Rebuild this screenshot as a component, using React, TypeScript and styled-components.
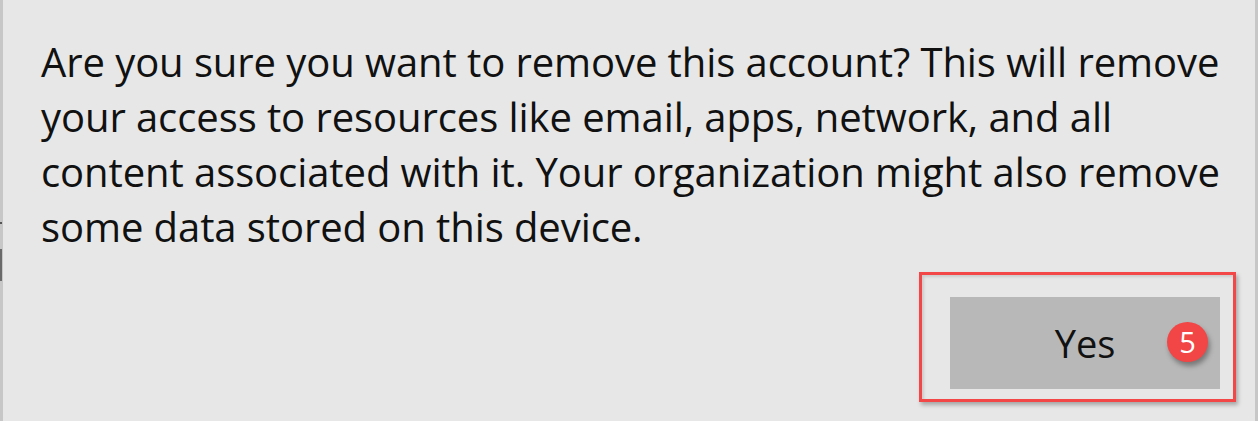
import React from "react";
import styled, { createGlobalStyle } from "styled-components";

const GlobalStyle = createGlobalStyle`
  html, body { margin: 0; padding: 0; background: #e7e7e7; }
  body { font-family: "Open Sans", "Noto Sans", sans-serif; }
`;

const Frame = styled.div`
  display: flex;
  width: 1258px;
  height: 421px;
  background: #e7e7e7;
  overflow: hidden;
`;

const EdgeStrip = styled.div`
  width: 3px;
  flex: none;
  background: #c7c7c7;
  display: flex;
  flex-direction: column;
`;

const EdgeMark = styled.div<{ $top: number; $h: number; $c: string }>`
  width: 2px;
  height: ${(p) => p.$h}px;
  margin-top: ${(p) => p.$top}px;
  background: ${(p) => p.$c};
`;

const Panel = styled.div`
  flex: 1;
  display: flex;
  flex-direction: column;
  padding: 34px 0 0 38px;
`;

const Message = styled.p`
  margin: 0;
  font-size: 40px;
  letter-spacing: -0.08px;
  line-height: 55px;
  color: #111;
  white-space: nowrap;
`;

const ButtonRow = styled.div`
  display: flex;
  justify-content: flex-end;
  margin-top: 43px;
  padding-right: 35px;
`;

const ButtonWrap = styled.div`
  position: relative;
`;

const YesButton = styled.button`
  width: 270px;
  height: 92px;
  border: none;
  background: #b8b8b8;
  font-family: "Open Sans", "Noto Sans", sans-serif;
  font-size: 38px;
  color: #111;
  padding: 0;
`;

const Annotation = styled.div`
  position: absolute;
  left: -31px;
  top: -25px;
  right: -16px;
  bottom: -13px;
  border: 3px solid #f34646;
  box-shadow: 2px 3px 4px rgba(0, 0, 0, 0.28), inset 2px 2px 3px rgba(0, 0, 0, 0.12);
  pointer-events: none;
`;

const Badge = styled.div`
  position: absolute;
  right: 12px;
  top: 25px;
  width: 41px;
  height: 40px;
  border-radius: 50%;
  background: #f24545;
  color: #fff;
  font-family: "Open Sans", "Noto Sans", sans-serif;
  font-size: 29px;
  line-height: 40px;
  text-align: center;
  box-shadow: 2px 4px 5px rgba(0, 0, 0, 0.35);
`;

export default function App() {
  return (
    <>
      <GlobalStyle />
      <Frame>
        <EdgeStrip>
          <EdgeMark $top={222} $h={2} $c="#555" />
          <EdgeMark $top={25} $h={32} $c="#6a6a6a" />
        </EdgeStrip>
        <Panel>
          <Message>
            Are you sure you want to remove this account? This will remove
            <br />
            your access to resources like email, apps, network, and all
            <br />
            content associated with it. Your organization might also remove
            <br />
            some data stored on this device.
          </Message>
          <ButtonRow>
            <ButtonWrap>
              <YesButton>Yes</YesButton>
              <Annotation />
              <Badge>5</Badge>
            </ButtonWrap>
          </ButtonRow>
        </Panel>
        <EdgeStrip />
      </Frame>
    </>
  );
}
